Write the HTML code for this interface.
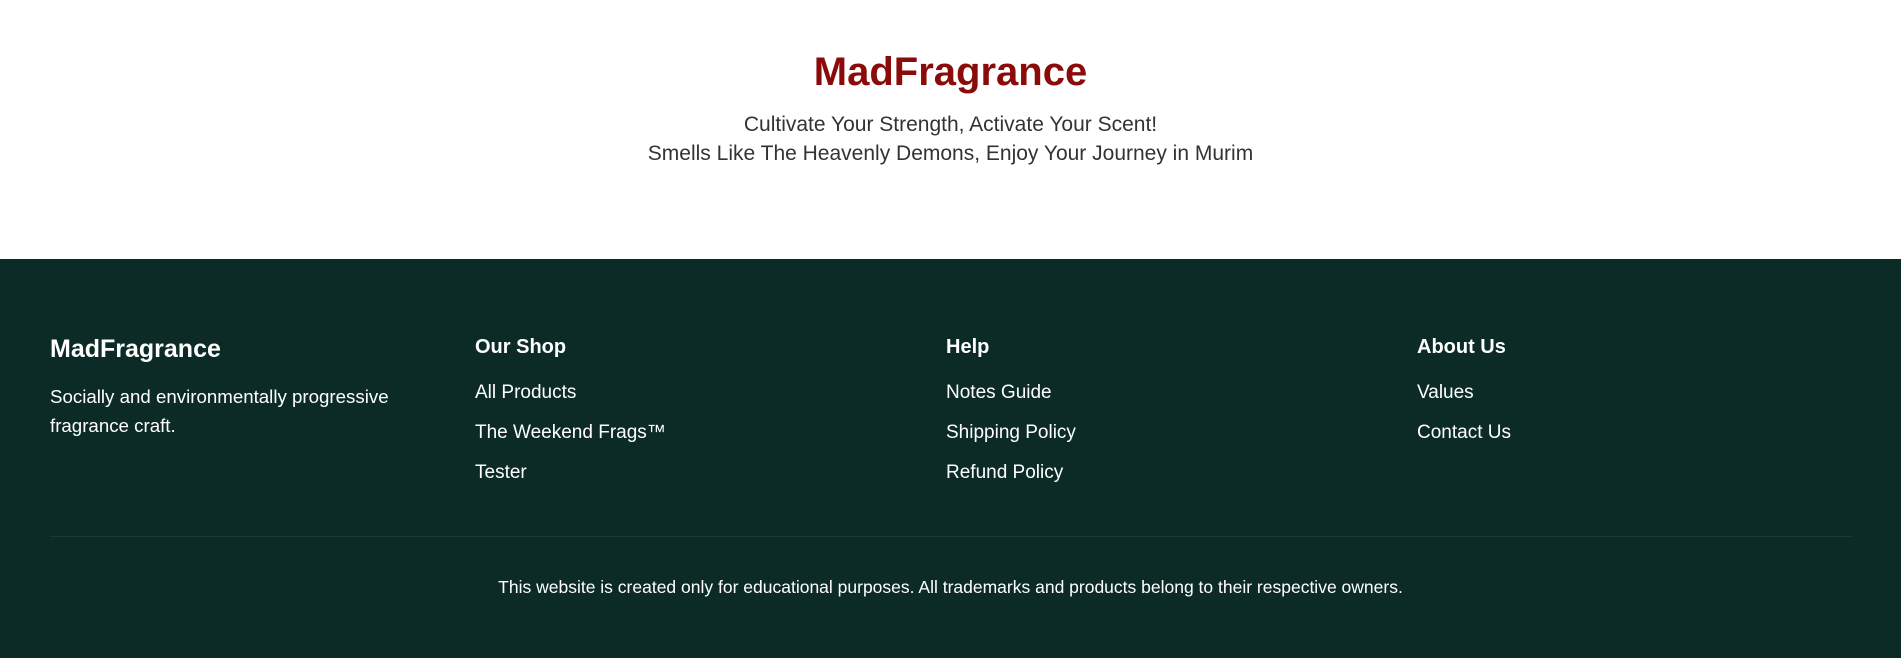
<!DOCTYPE html>
<html><head><meta charset="utf-8"><style>
*{margin:0;padding:0;box-sizing:border-box}
body{width:1901px;height:658px;overflow:hidden;font-family:"Liberation Sans",Arial,sans-serif;background:#fff;position:relative}
.a{position:absolute;white-space:nowrap}
h1{position:absolute;left:0;width:1901px;text-align:center;top:50px;font-size:40px;color:#8b0a0a;font-weight:bold}
.sub{position:absolute;left:0;width:1901px;text-align:center;font-size:21px;color:#333}
footer{position:absolute;left:0;top:259px;width:1901px;height:399px;background:#0c2b26;color:#fff}
.h{font-size:20px;font-weight:bold}
.l{font-size:19px}
.div{position:absolute;left:50px;width:1802px;top:277px;height:1px;background:#1c3a34}
</style></head><body>
<h1>MadFragrance</h1>
<div class="sub" style="top:113px">Cultivate Your Strength, Activate Your Scent!</div>
<div class="sub" style="top:142px">Smells Like The Heavenly Demons, Enjoy Your Journey in Murim</div>
<footer>
<div class="a" style="left:50px;top:76px;font-size:25px;font-weight:bold">MadFragrance</div>
<div class="a" style="left:50px;top:123px;line-height:29px;font-size:18.7px">Socially and environmentally progressive<br>fragrance craft.</div>
<div class="a h" style="left:475px;top:77px">Our Shop</div>
<div class="a l" style="left:475px;top:123px">All Products</div>
<div class="a l" style="left:475px;top:163px">The Weekend Frags™</div>
<div class="a l" style="left:475px;top:203px">Tester</div>
<div class="a h" style="left:946px;top:77px">Help</div>
<div class="a l" style="left:946px;top:123px">Notes Guide</div>
<div class="a l" style="left:946px;top:163px">Shipping Policy</div>
<div class="a l" style="left:946px;top:203px">Refund Policy</div>
<div class="a h" style="left:1417px;top:77px">About Us</div>
<div class="a l" style="left:1417px;top:123px">Values</div>
<div class="a l" style="left:1417px;top:163px">Contact Us</div>
<div class="div"></div>
<div class="a" style="left:0;width:1901px;text-align:center;top:318px;font-size:17.5px">This website is created only for educational purposes. All trademarks and products belong to their respective owners.</div>
</footer>
</body></html>
